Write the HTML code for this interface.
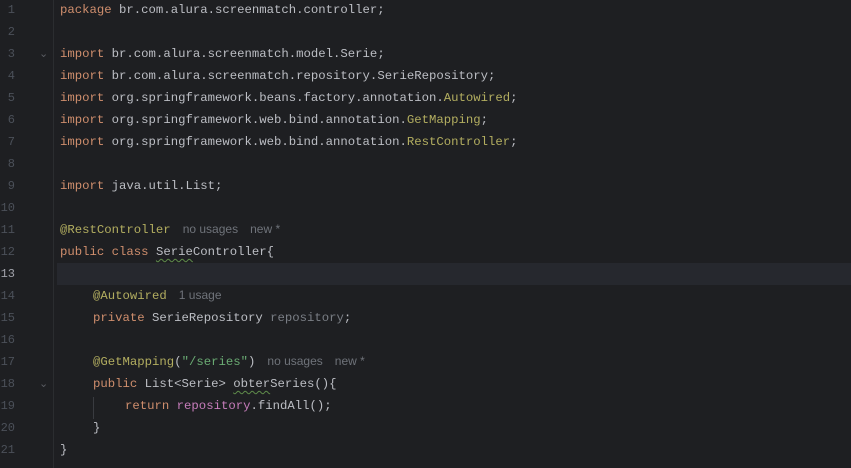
<!DOCTYPE html>
<html><head><meta charset="utf-8"><style>
html,body{margin:0;padding:0;width:851px;height:468px;background:#1e1f22;overflow:hidden}
.ln{position:absolute;left:0;width:15px;text-align:right;font:12px "Liberation Mono",monospace;color:#4b5059;line-height:22px}
.row{position:absolute;left:60px;font:12.3px "Liberation Mono",monospace;color:#bcbec4;line-height:22px;white-space:pre}
.k{color:#cf8e6d}.a{color:#b3ae60}.s{color:#6aab73}.f{color:#c77dbb}.g{color:#7a7e85}
.h{font:12px "Liberation Sans",sans-serif;color:#6f737a;margin-left:12px}
.w{text-decoration:underline wavy #5f8c4a;text-underline-offset:3px;text-decoration-thickness:1px}
.fold{position:absolute;left:39px;color:#5a5d63;font:11px "Liberation Sans",sans-serif;line-height:22px}
</style></head><body>
<div style="position:absolute;left:57px;top:263px;width:794px;height:22px;background:#26282e"></div>
<div style="position:absolute;left:53px;top:0;width:1px;height:468px;background:#2b2d30"></div>
<div style="position:absolute;left:93px;top:397px;width:1px;height:22px;background:#393b40"></div>
<div class="ln" style="top:-1px">1</div>
<div class="ln" style="top:21px">2</div>
<div class="ln" style="top:43px">3</div>
<div class="ln" style="top:65px">4</div>
<div class="ln" style="top:87px">5</div>
<div class="ln" style="top:109px">6</div>
<div class="ln" style="top:131px">7</div>
<div class="ln" style="top:153px">8</div>
<div class="ln" style="top:175px">9</div>
<div class="ln" style="top:197px">10</div>
<div class="ln" style="top:219px">11</div>
<div class="ln" style="top:241px">12</div>
<div class="ln" style="top:263px;color:#a1a3ab">13</div>
<div class="ln" style="top:285px">14</div>
<div class="ln" style="top:307px">15</div>
<div class="ln" style="top:329px">16</div>
<div class="ln" style="top:351px">17</div>
<div class="ln" style="top:373px">18</div>
<div class="ln" style="top:395px">19</div>
<div class="ln" style="top:417px">20</div>
<div class="ln" style="top:439px">21</div>
<div class="fold" style="top:43px">⌄</div>
<div class="fold" style="top:373px">⌄</div>
<div class="row" style="top:-1px"><span class="k">package</span> br.com.alura.screenmatch.controller;</div>
<div class="row" style="top:43px"><span class="k">import</span> br.com.alura.screenmatch.model.Serie;</div>
<div class="row" style="top:65px"><span class="k">import</span> br.com.alura.screenmatch.repository.SerieRepository;</div>
<div class="row" style="top:87px"><span class="k">import</span> org.springframework.beans.factory.annotation.<span class="a">Autowired</span>;</div>
<div class="row" style="top:109px"><span class="k">import</span> org.springframework.web.bind.annotation.<span class="a">GetMapping</span>;</div>
<div class="row" style="top:131px"><span class="k">import</span> org.springframework.web.bind.annotation.<span class="a">RestController</span>;</div>
<div class="row" style="top:175px"><span class="k">import</span> java.util.List;</div>
<div class="row" style="top:219px"><span class="a">@RestController</span><span class="h">no usages</span><span class="h">new *</span></div>
<div class="row" style="top:241px"><span class="k">public class</span> <span class="w">Serie</span>Controller{</div>
<div class="row" style="top:285px;left:93px"><span class="a">@Autowired</span><span class="h">1 usage</span></div>
<div class="row" style="top:307px;left:93px"><span class="k">private</span> SerieRepository <span class="g">repository</span>;</div>
<div class="row" style="top:351px;left:93px"><span class="a">@GetMapping</span>(<span class="s">"/series"</span>)<span class="h">no usages</span><span class="h">new *</span></div>
<div class="row" style="top:373px;left:93px"><span class="k">public</span> List&lt;Serie&gt; <span class="w">obter</span>Series(){</div>
<div class="row" style="top:395px;left:125px"><span class="k">return</span> <span class="f">repository</span>.findAll();</div>
<div class="row" style="top:417px;left:93px">}</div>
<div class="row" style="top:439px">}</div>
</body></html>
